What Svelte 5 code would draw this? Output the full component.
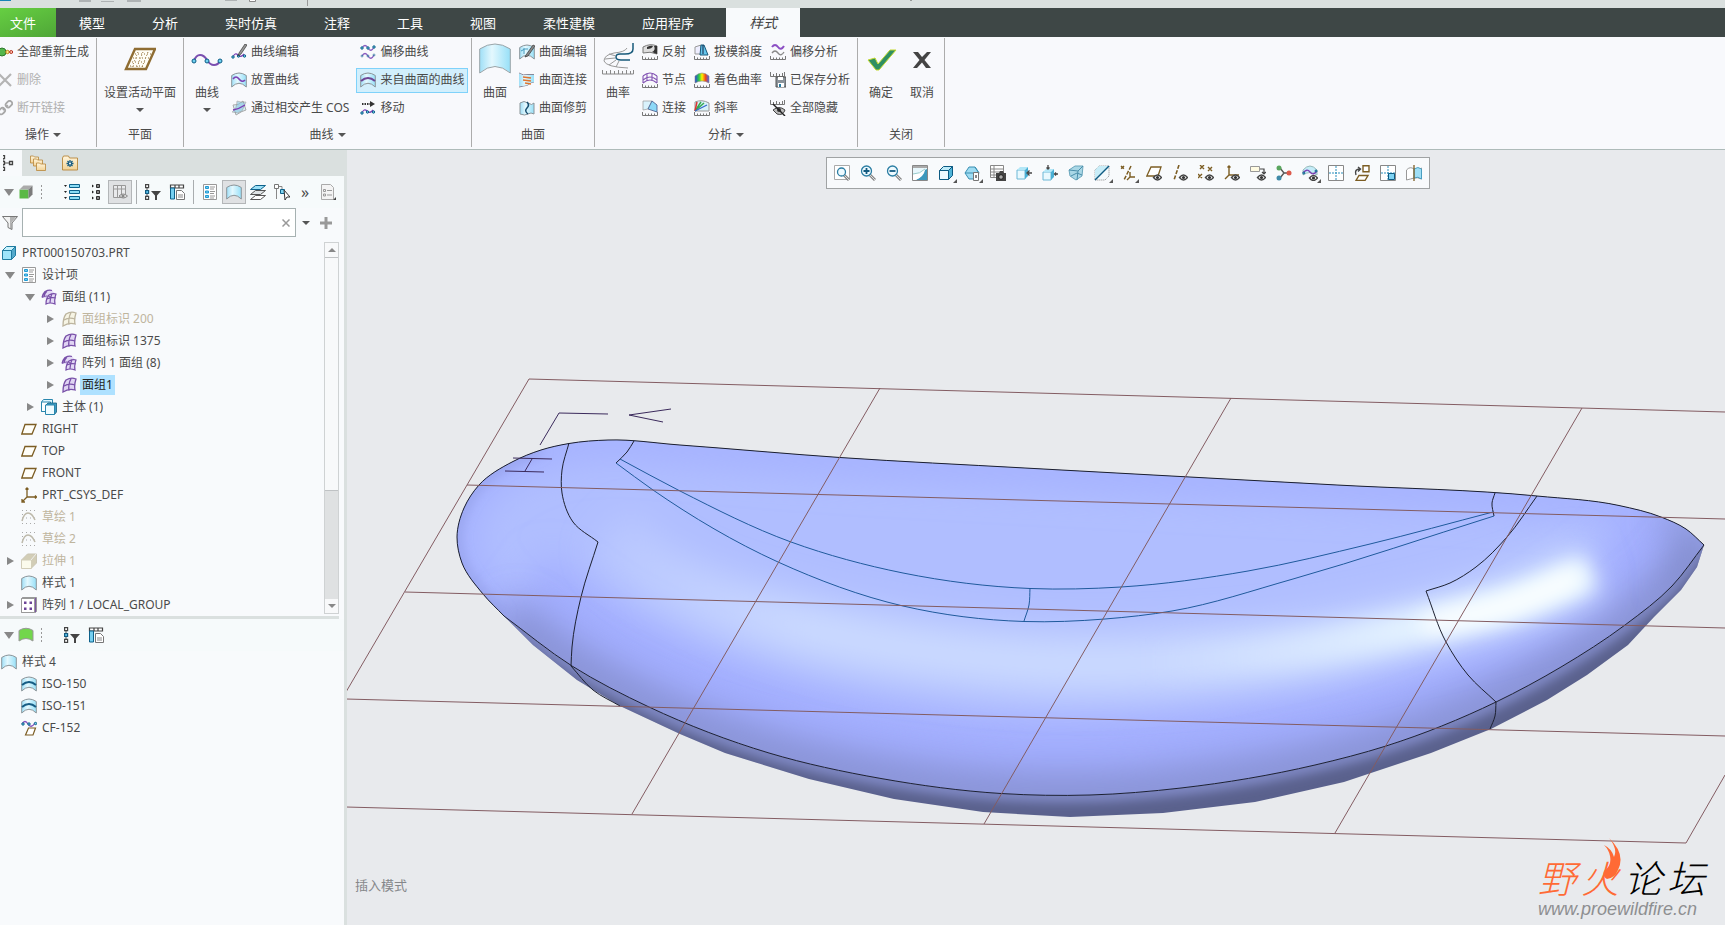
<script>
	const menuTabs = ['模型', '分析', '实时仿真', '注释', '工具', '视图', '柔性建模', '应用程序'];

	const node = (x, y, r = 1.5) =>
		`<circle cx="${x}" cy="${y}" r="${r}" fill="#6fd0ee" stroke="#0d5c86" stroke-width="1"/>`;
	const eye = (x, y) =>
		`<path d="M${x} ${y}q4-5 8 0q-4 5-8 0z" fill="#fff" stroke="#444" stroke-width="1.4"/><circle cx="${x + 4}" cy="${y}" r="1.6" fill="#333"/>`;
	const ruler =
		'<path d="M.5 12v3.500h15V12M3.500 13.500v2M6.500 13.500v2M9.500 13.500v2M12.500 13.500v2" fill="none" stroke="#777"/>';
	const topRuler =
		'<path d="M.5 0v4.500h14V0M3.500 2v2M6.500 1v3M9.500 2v2M12.500 1v3" fill="none" stroke="#777"/>';
	const surface =
		'<path d="M.7 3.500Q8-1.500 15.300 3.500V15Q8 7.500.7 15z" fill="url(#cyan)" stroke="#8b9499"/>';
	const wave =
		'<path d="M2 13q2-5 5-2t6-1" fill="none" stroke="#7b3fb5" stroke-width="1.300"/>' + node(2, 13, 1.2) + node(7.5, 12, 1.2) + node(13.5, 12, 1.2);
	const quilt = (stroke, fill) =>
		`<path d="M5 3q5-3 10-1q-2 6-1 11q-6-2-12 2q0-8 3-12z" fill="${fill}" stroke="${stroke}" stroke-width="1.300"/><path d="M10 1.500q-3 6-2 12M3 9q5-3 11-1" fill="none" stroke="${stroke}" stroke-width="1.300"/>`;
	const quiltGroup =
		'<path d="M3 4q4-4 8-2.500l4 4q-2 4 0 8l-2 2q-4-3-8 0q-1-4 0-6l-4-1q0-2 2-4.500z" fill="#e3d9f5"/><path d="M1 8.500q1-4 3-6 4-2 7-1M1 8.500q5-3 9 0M6 2q-3 3-3 6M5 15q0-6 3-9 4-2 7-1-2 5-1 10-5-2-9 0zM11 4.500q-2 5-2 9M6 10q4-2 9-1" fill="none" stroke="#7850a8" stroke-width="1.200"/>';
	const zoomGlass = (inner) =>
		`<path d="M10 10l5 5" stroke="#888" stroke-width="3"/><path d="M10 10l5 5" stroke="#ddd"/><circle cx="6.500" cy="6" r="5" fill="#eefaff" stroke="#2b7da3" stroke-width="1.300"/>${inner}`;
	const cube = (front, top, side, line) =>
		`<path d="M1.500 5.500h9v9h-9z" fill="${front}" stroke="${line}"/><path d="M1.500 5.500l4-4h9l-4 4z" fill="${top}" stroke="${line}"/><path d="M10.500 5.500l4-4v9l-4 4z" fill="${side}" stroke="${line}"/>`;

	const icons = {
		regen: '<path d="M8 8h7" stroke="#555"/><circle cx="5" cy="8" r="4" fill="#54b64b" stroke="#2d7a2b"/><circle cx="10.500" cy="8" r="1.700" fill="#ffe08a" stroke="#b98615"/><circle cx="14.200" cy="8" r="1.500" fill="#ffc2b0" stroke="#b53422"/>',
		remove: '<path d="M2 2l12 12M14 2L2 14" stroke="#b4b4b4" stroke-width="2.200"/>',
		unlink: '<g fill="none" stroke="#a8a8a8" stroke-width="1.800" transform="rotate(-45 8 8)"><rect x="0" y="5.500" width="7" height="5" rx="2.500"/><rect x="10" y="5.500" width="7" height="5" rx="2.500"/><path d="M5 8h2.500M9.500 8H12"/></g>',
		curveEdit: wave + '<path d="M8 9l6-9 2 1-6 9-3 2z" fill="#999" stroke="#333" stroke-width=".7"/>',
		curvePlace: surface + '<path d="M2 7q3-4 6 0t6 1" fill="none" stroke="#7b3fb5" stroke-width="1.600"/>',
		cos: '<path d="M2 5q5 1 10-4l3 9q-4 1-10 5z" fill="#d3eef7" stroke="#aaa"/><path d="M6 1q5 2 9 1l-4 9q-4 3-10 1 5-3 5-11z" fill="#8bc6df" opacity=".6" stroke="#888" stroke-width=".8"/><path d="M2 10q6-1 12-5" stroke="#7b3fb5" stroke-width="1.500" fill="none"/>',
		offsetCurve: '<path d="M2 4q3-5 6 0t6-1M2 12q3-5 6 0t6-1" fill="none" stroke="#8a5cc0" stroke-width="1.300"/>' + node(2, 4, 1.2) + node(8, 4, 1.2) + node(14, 3, 1.2) + '<g opacity=".6">' + node(2, 12, 1) + node(8, 12, 1) + node(14, 11, 1) + '</g>',
		isoCurve: surface + '<path d="M1 9Q8 3 15 9" fill="none" stroke="#155c84" stroke-width="2"/>',
		fromSurface: surface + '<path d="M1 9Q8 3 15 9" fill="none" stroke="#6d4596" stroke-width="2"/>',
		move: '<path d="M2 4h9" stroke="#333" stroke-width="2" stroke-dasharray="1.500 1"/><path d="M10 1l5 3-5 3z" fill="#333"/>' + wave,
		surface,
		surfEdit: surface + '<path d="M5 4v6M2 7q4-3 7-2" fill="none" stroke="#4a9ec0"/><path d="M7 11L14 1l2 1-7 10-3 1z" fill="#8b8b8b" stroke="#333" stroke-width=".7"/>',
		surfJoin: '<path d="M0 1q4 3 9 1.500l6 0M15 10q-4 0-6 3-4 1-9 2" fill="none" stroke="#889"/><path d="M0 1.500q4 3 9 1.500h6v7q-4 0-6 3-4 1-9 1z" fill="url(#cyan)"/><path d="M4 5l8 1M4 8l8 1M6 11l6 1" stroke="#e07530" stroke-width="1.500"/>',
		surfTrim: '<path d="M1 3q4-3 8 0t6 0v11q-3-2-6 0t-8 0z" fill="url(#cyan)" stroke="#8b9499"/><path d="M8 2q3 3 0 6t1 6" fill="none" stroke="#174e70" stroke-width="1.500"/>',
		reflect: '<path d="M1 3q7-4 14-1v8q-7-3-14-1z" fill="#ddd" stroke="#777"/><path d="M5 3q4-2 6-1-1 3-6 3zM12 2h3v8l-5-2q4-2 2-6z" fill="#333"/>' + ruler,
		knots: '<path d="M1 4q7-6 14 0M1 8q7-6 14 0M1 11q7-6 14 0M1 4v7M5 1.500v7M10 1.500v7M15 4v7" fill="none" stroke="#8354b3" stroke-width="1.100"/>' + ruler,
		connect: '<path d="M1 1l9 0-4 8-5 1z" fill="#d9f2fc" stroke="#999" stroke-width=".7"/><path d="M10 1l5 4v7l-9-3z" fill="#8cd8f7" stroke="#458" stroke-width=".8"/>' + ruler,
		draft: '<path d="M1 3l6-2v9H1z" fill="#eef" stroke="#999"/><path d="M7 1h3l4 10H6z" fill="#65c5ec" stroke="#17587a"/><path d="M9 1v9" stroke="#124"/>' + ruler,
		shaded: '<path d="M1 4q7-6 14 0v7q-7-4-14 0z" fill="url(#rainbow)" stroke="#888" stroke-width=".6"/>' + ruler,
		slope: '<path d="M1 2q7-3 14 1v8H1z" fill="#d9f2f8" stroke="#999"/><path d="M1 11L7 2M1 11l9-8" stroke-width="1.500" stroke="#34a853"/><path d="M1 11L3 2" stroke="#d33" stroke-width="1.500"/><path d="M1 11l12-6" stroke="#36c" stroke-width="1.200"/>' + ruler,
		offsetAnalysis: '<path d="M2 3q3-4 6 0t6-1" fill="none" stroke="#8c4fc4" stroke-width="2"/><path d="M2 9q3-4 6 0t6-1" fill="none" stroke="#888" stroke-width="1.300"/>' + ruler,
		savedAnalysis: topRuler + '<path d="M6 5h10v10H6z" fill="#8a9299" stroke="#555"/><path d="M8 5h5v3H8zM8 11h6v4H8z" fill="#fff"/><path d="M9 12h2v3H9z" fill="#277da5"/>',
		hideAll: topRuler + '<path d="M3 10q6-5 12 0-2 6-8 4z" fill="#bbb" stroke="#444"/><circle cx="9" cy="10" r="2" fill="#333"/><path d="M3 4l12 12" stroke="#222" stroke-width="1.400"/>',
		tree: '<path d="M3 2v12M3 8h8" stroke="#555"/><g fill="#fff" stroke="#444" stroke-width="1.300"><path d="M1.500.7h3v3h-3zM1.500 6.500h3v3h-3zM1.500 12.300h3v3h-3zM9.500 6.500h3v3h-3z"/></g>',
		folders: '<g fill="url(#folder)" stroke="#b8873a" stroke-width=".8"><path d="M.5 1h3l1 1h4v6h-8z"/><path d="M3.500 4h3l1 1h5v6h-9z"/><path d="M6.500 8h3l1 1h5v6.500h-9z"/></g>',
		favorite: '<path d="M.5 3l1-2h5l1 2h8v12H.5z" fill="url(#folder)" stroke="#b8873a" stroke-width=".9"/><path d="M8 5v7M4.500 8.500h7M5.500 6l5 5M10.500 6l-5 5" stroke="#155b80" stroke-width="1.300"/><circle cx="8" cy="8.500" r="1" fill="#fff"/>',
		greenCube: cube('#5bb946', '#aaa', '#7b7b7b', 'none'),
		greenSurface: '<path d="M1 3.500Q8-1 15 3.500V14Q8 9 1 14z" fill="#72d64c" stroke="#999"/>',
		listExpand: '<g fill="#8bdcf5" stroke="#0d618b"><path d="M5.500.5h10v3h-10zM5.500 6.500h10v3h-10zM5.500 12.500h10v3h-10z"/></g><path d="M0 1h3L1.500 3zM0 7h3L1.500 9zM0 13h3l-1.500 2z" fill="#222"/>',
		listCollapse: '<g fill="#888" stroke="#333"><path d="M8.500.5h3v3h-3zM8.500 6.500h3v3h-3zM8.500 12.500h3v3h-3z"/></g><path d="M4 .5v3L6 2zM4 6.500v3L6 8zM4 12.500v3l2-1.500z" fill="#222"/>',
		tableEye: '<path d="M1.500 1.500h12v12h-12zM1.500 5h12M5.500 1.500v12M9.500 1.500v12" fill="#e9eaec" stroke="#999"/><path d="M7 12q4-4 8.500 0-4 4-8.500 0z" fill="#ddd" stroke="#888"/><circle cx="11" cy="12" r="1.500" fill="#888"/>',
		treeFilter: '<path d="M2 2v12" stroke="#555"/><g fill="#fff" stroke="#444" stroke-width="1.200"><path d="M.6.7h3v3h-3zM.6 12.300h3v3h-3z"/><path d="M.6 6.500h3v3h-3z" fill="#57bce5" stroke="#135b80"/></g><path d="M6 7h10l-4 4.500V16h-2v-4.500z" fill="#444"/>',
		tableDoc: '<path d="M1.500 1h13v3h-13zM6 1v3M10 1v3" fill="#fff" stroke="#444" stroke-width="1.200"/><path d="M1.500 4h4v11h-4z" fill="#75cff0" stroke="#0d618b"/><path d="M7.500 6.500h5l3 3v6h-8z" fill="#fff" stroke="#777"/><path d="M9 11h5M9 13h5" stroke="#888"/>',
		designItems: '<path d="M1.500.5h13v15h-13z" fill="#fff" stroke="#999"/><path d="M3.500 2.500h3v2h-3zM3.500 7h3v2h-3zM3.500 11.500h3v2h-3z" fill="#73c7ee" stroke="#1e9bd4"/><path d="M8 3h5M8 5h4M8 7.500h5M8 9.500h4M8 12h5M8 14h4" stroke="#999"/>',
		layers: '<g fill="#fff" stroke="#555"><path d="M.5 15.500l5-4h10l-5 4z"/><path d="M.5 10.500l5-4h10l-5 4z" fill="#dfe4e6"/><path d="M.5 5.500l5-4h10l-5 4z" fill="#9be0f7" stroke="#0d618b"/></g>',
		treeCursor: '<path d="M2.500 4v11M4 2.500h4v5" fill="none" stroke="#888"/><path d="M.5.5h4v4h-4z" fill="#fff" stroke="#777"/><path d="M6.500 5.500h4v4h-4z" fill="#7fd5f2" stroke="#0d618b"/><path d="M10 6l6 7-3 0-2 3z" fill="#fff" stroke="#333"/>',
		page: '<path d="M1.500.5h9l3 3v12h-12z" fill="#f4f4f4" stroke="#aaa"/><path d="M3.500 5.500h2v2h-2zM3.500 10h2v2h-2zM7 6.500h5M7 11h5" fill="none" stroke="#999"/><path d="M16 13v3h-3z" fill="#444"/>',
		funnel: '<path d="M.5 1.500h15L10 8v6.500l-4-2V8z" fill="#f2f2f2" stroke="#777"/><path d="M8 2h6L9.500 7.500V14H8z" fill="#888" opacity=".6"/>',
		part: cube('#9ee4fa', '#c8f2fd', '#54a9cb', '#207ba0'),
		quiltGroup,
		quilt: quilt('#7850a8', '#e0d4f3'),
		quiltOff: quilt('#bcb49e', '#f6f4e4'),
		bodies: '<path d="M.5 3l2-2.500h9v9l-2 3h-9z" fill="#dff6fe" stroke="#2a87ae"/><path d="M.5 3h9v9.500h-9z" fill="#fff" stroke="#2a87ae"/><path d="M5 6l2-2h8.500v9l-2 2.500z" fill="#3d9cc4" stroke="#17607f" stroke-width=".8"/><path d="M4.500 6h9v9.500h-9z" fill="#effbff" stroke="#2a87ae"/>',
		plane: '<path d="M4 3.500h11l-4 9.500H.8z" fill="#fffef8" stroke="#7c5d23" stroke-width="1.300"/>',
		csys: '<path d="M6 1v9M6 10h9M6 10l-5 5M4.500 2.500L6 1l1.500 1.500M14 8.500l1.500 1.500-1.500 1.500M1 12v3h3" fill="none" stroke="#7c5d23" stroke-width="1.300"/>',
		sketch: '<path d="M1 1.500h14M1 14.500h14M1 5.500h1M1 9h14" stroke="#aaa" stroke-dasharray="1 3"/><path d="M1 12q2-8 6-8t7 7" fill="none" stroke="#bdb9ab" stroke-width="1.500"/>',
		extrude: '<path d="M.5 7l6-6h9v9l-5 5H.5z" fill="#d2cdb6" stroke="#c9c5b3"/><path d="M.5 7h10v8.500H.5z" fill="#fbfbec" stroke="#d2ceb9"/><path d="M10 7l5-6" stroke="#eee"/>',
		pattern: '<path d="M.5 1.500l1-1h14v14l-1 1H.5z" fill="#7d55a5" stroke="#999"/><path d="M.5 1.500h13v14H.5z" fill="#fff" stroke="#999"/><path d="M3 4.500h2.500V7H3zM8.500 4.500H11V7H8.500zM3 10.500h2.500V13H3zM8.500 10.500H11V13H8.500z" fill="#6c4497"/>',
		curveOnPlane: '<path d="M1 4q3-5 6 0t7-1" fill="none" stroke="#8350bd" stroke-width="1.300"/>' + node(2, 4, 1.2) + node(8, 4, 1.2) + node(14.500, 3.500, 1.200) + '<path d="M7.500 8h7L12 15H4.500z" fill="#fff" stroke="#7c5d23" stroke-width="1.200"/>',
		zoomFit: '<path d="M.5.5h15v14H.5z" fill="#fff" stroke="#aaa"/>' + zoomGlass('').replace('cx="6.500" cy="6" r="5"', 'cx="7.500" cy="7" r="4"'),
		zoomIn: zoomGlass('<path d="M6.500 3v6M3.500 6h6" stroke="#125a80" stroke-width="1.800"/>'),
		zoomOut: zoomGlass('<path d="M3.500 6h6" stroke="#125a80" stroke-width="1.800"/>'),
		repaint: '<path d="M.5.5h15v15H.5z" fill="#e8f7fc" stroke="#888"/><path d="M1 2h14" stroke="#aaa" stroke-width="2"/><path d="M13 5l2-1v11H3q9-3 10-10z" fill="#3c98bd"/><path d="M1 9q6 0 12-5-2 8-9 11H1z" fill="#fff"/><path d="M1 9q7 0 12-5" fill="none" stroke="#9cc"/>',
		shadeMode: cube('#eefaff', '#bdebf9', '#4fb4d8', '#0d5a82'),
		savedView: '<path d="M1 8l4-6h6l4 6-4 6H5z" fill="#9fdcf2" stroke="#3b8fb2"/><path d="M1 8h14L11 2" fill="none" stroke="#3b8fb2"/><path d="M9.500 7.500h5v8h-5z" fill="#fff" stroke="#777"/><path d="M11 10h2v3h-2z" fill="#888"/>',
		snapshot: '<path d="M.5.5h13v12H.5zM.5 4h13M.5 7h13M.5 10h13M4 .5v12" fill="#fff" stroke="#888"/><path d="M6 8h3l1-2h3l1 2h2v8H6z" fill="#444"/><circle cx="11" cy="12" r="2.300" fill="#aaa" stroke="#222"/>',
		cubeLeft: '<path d="M1 5h8v9H1z" fill="#e9f9fe" stroke="#6db8d6"/><path d="M1 5l3-3h8L9 5z" fill="#b3e7f7"/><path d="M9 5l3-3v9l-3 3z" fill="#4ab0d5"/><path d="M16 8h-4M13.500 5.500L11 8l2.500 2.500" fill="none" stroke="#444" stroke-width="1.300"/>',
		cubeFront: '<path d="M1 7h8v8H1z" fill="#e9f9fe" stroke="#6db8d6"/><path d="M1 7l3-3h8L9 7z" fill="#b3e7f7"/><path d="M9 7l3-3v8l-3 3z" fill="#4ab0d5"/><path d="M16 9h-3M6 0v4M4.500 2.500L6 4l1.500-1.500M14 7.500L12.500 9l1.500 1.500" fill="none" stroke="#444" stroke-width="1.300"/>',
		perspective: '<path d="M1 5l6-4h8l-1 10-6 4-6-4z" fill="#a9d7e6" stroke="#6aa6bc"/><path d="M1 5l9 1 5-5M10 6l-1 9M3 11l6-3 5 2" fill="none" stroke="#4a8eaa"/>',
		section: '<path d="M1 5l4-4h10v10l-4 4H1z" fill="#f5fafc" stroke="#888" stroke-dasharray="1 1"/><path d="M1 14V5l4-4h9z" fill="#c9edf8"/><path d="M1 15L15 1" stroke="#0d5a82" stroke-width="1.500"/>',
		datumAll: '<path d="M1 1l3 3M4 1L1 4M11 1L4 15" stroke="#7c5d23" stroke-width="1.500" stroke-dasharray="4 1.500"/><path d="M10 7v5h5M10 12l-3 3" fill="none" stroke="#7c5d23" stroke-width="1.400"/>',
		planeEye: '<path d="M5 2h10l-3 9H.8z" fill="#fff" stroke="#7c5d23" stroke-width="1.300"/>' + eye(7.5, 12.5),
		axisEye: '<path d="M7 0L2 15" stroke="#7c5d23" stroke-width="1.600" stroke-dasharray="4 1.500"/>' + eye(7.5, 12.5),
		pointEye: '<path d="M2 0l4 4M6 0L2 4M10 2l4 4M14 2l-4 4M0 9l4 4M4 9l-4 4" stroke="#7c5d23" stroke-width="1.400"/>' + eye(7.5, 12.5),
		csysEye: '<path d="M5 1v9h10M5 10l-4 4M3.500 2.500L5 1l1.500 1.500" fill="none" stroke="#7c5d23" stroke-width="1.400"/>' + eye(7.5, 12.5),
		noteEye: '<path d="M.5 1.500h9v5h-9z" fill="#fffbe2" stroke="#999"/><path d="M10 4h4v5M12 7l2 2 2-2" fill="none" stroke="#444" stroke-width="1.200"/>' + eye(7.5, 12.5),
		spinCenter: '<path d="M4 3l4 5M8 8l-4 5M8 8h5" stroke="#555" stroke-width="1.400"/><circle cx="3" cy="3" r="2.500" fill="#5aa65e"/><circle cx="3" cy="13" r="2.500" fill="#3f8aa8"/><circle cx="13" cy="8" r="2.500" fill="#dc5a4c"/>',
		curveEye: '<path d="M1 5q7-8 14 0v5q-7-5-14 0z" fill="#c4ecf8" stroke="#9bb"/><path d="M1 8q4-5 7-1t7-1" fill="none" stroke="#7b3fb5" stroke-width="1.300"/>' + node(1.8, 8, 1) + node(14, 6, 1) + eye(7.5, 13),
		gridView: '<path d="M.5.5h15v15H.5z" fill="#fff" stroke="#888"/><path d="M8 1v14M1 8h14" stroke="#2b8fbd" stroke-dasharray="2 1"/>',
		orient: '<path d="M9 .7h6v6H9zM5 10.500h9l-3 5H2z" fill="#fff" stroke="#7c5d23" stroke-width="1.400"/><path d="M2 10Q0 4 6 4M4 2l2.500 2L4 6.500" fill="none" stroke="#444" stroke-width="1.400"/>',
		viewport: '<path d="M.5.5h15v15H.5z" fill="#fff" stroke="#888"/><path d="M8 1v14M1 8h14" stroke="#2b8fbd" stroke-dasharray="2 1"/><path d="M8.500 8.500h6v6h-6z" fill="#7ed3f3" stroke="#0d5a82"/>',
		mirror: '<path d="M.5 5Q4 1 8 4t7.500-1v11q-4-2-7.500-1t-7.500 2z" fill="#fff" stroke="#999"/><path d="M8 4q4-3 7.500 0v10Q12 11 8 13z" fill="#9fdff6" stroke="#4a9ec0"/><path d="M8 0v16" stroke="#7c5d23" stroke-width="1.300"/>'
	};

	const bigIcons = {
		plane: '<path d="M11 6h20l-9 20H2z" fill="#fffef6" stroke="#8f6d33" stroke-width="2.400"/><path d="M11 11h16M9 15h16M8 19h15M6 23h14M14 9l-6 15M19 9l-6 15M24 9l-6 15" stroke="#8f6d33" stroke-dasharray="1 2"/>',
		curve: '<path d="M3 18Q5 12 9 12T16 17T23 22T29 18" fill="none" stroke="#7b4fb0" stroke-width="2"/>' + node(3, 18, 2) + node(16, 18, 2) + node(29, 18, 2),
		surface: '<path d="M.7 6Q16-4 31.300 6v24Q16 17 .7 30z" fill="url(#cyan)" stroke="#9aa4a8"/>',
		curvature: '<path d="M31 0v6q0 5-8 5h-5q-4 0-4 3t5 3h9" fill="none" stroke="#175a7a" stroke-width="1.500"/><path d="M25 5q-2 4-13 5-10 2-10 8 2 6 24 7M14 13L7 11M13 15l-10 1M14 17l-7 5M17 18l-3 6" fill="none" stroke="#999"/><path d="M.5 27v4h31v-4M4.500 28v3M8.500 27v4M12.500 28v3M16.500 27v4M20.500 28v3M24.500 27v4M28.500 28v3" fill="none" stroke="#888"/>',
		ok: '<path d="M3 17l7-2 3 6L25 7h6L14 27H11z" fill="#2f8f63" stroke="#c4d92e" stroke-width="1"/>',
		cancel: '<path d="M7 9h5l4 5 5-5h4l-6.500 8 6.500 8h-5l-4-5.500L11 25H7l6.500-8z" fill="#444"/>'
	};

	const groups = [
		{
			label: '操作', arrow: true, cls: 'g-ops', cols: [
				[['regen', '全部重新生成'], ['remove', '删除', 'off'], ['unlink', '断开链接', 'off']]
			]
		},
		{ label: '平面', cls: 'g-plane', big: [['plane', '设置活动平面', true]], cols: [] },
		{
			label: '曲线', arrow: true, cls: 'g-curve', big: [['curve', '曲线', true]], cols: [
				[['curveEdit', '曲线编辑'], ['curvePlace', '放置曲线'], ['cos', '通过相交产生 COS']],
				[['offsetCurve', '偏移曲线'], ['fromSurface', '来自曲面的曲线', 'on'], ['move', '移动']]
			]
		},
		{
			label: '曲面', cls: 'g-surf', big: [['surface', '曲面']], cols: [
				[['surfEdit', '曲面编辑'], ['surfJoin', '曲面连接'], ['surfTrim', '曲面修剪']]
			]
		},
		{
			label: '分析', arrow: true, cls: 'g-analysis', big: [['curvature', '曲率']], cols: [
				[['reflect', '反射'], ['knots', '节点'], ['connect', '连接']],
				[['draft', '拔模斜度'], ['shaded', '着色曲率'], ['slope', '斜率']],
				[['offsetAnalysis', '偏移分析'], ['savedAnalysis', '已保存分析'], ['hideAll', '全部隐藏']]
			]
		},
		{ label: '关闭', cls: 'g-close', big: [['ok', '确定'], ['cancel', '取消']], cols: [] }
	];

	const tree = [
		{ level: 0, icon: 'part', text: 'PRT000150703.PRT' },
		{ level: 1, icon: 'designItems', text: '设计项', open: true },
		{ level: 2, icon: 'quiltGroup', text: '面组 (11)', open: true },
		{ level: 3, icon: 'quiltOff', text: '面组标识 200', open: false, dim: true },
		{ level: 3, icon: 'quilt', text: '面组标识 1375', open: false },
		{ level: 3, icon: 'quiltGroup', text: '阵列 1 面组 (8)', open: false },
		{ level: 3, icon: 'quilt', text: '面组1', open: false, selected: true },
		{ level: 2, icon: 'bodies', text: '主体 (1)', open: false },
		{ level: 1, icon: 'plane', text: 'RIGHT' },
		{ level: 1, icon: 'plane', text: 'TOP' },
		{ level: 1, icon: 'plane', text: 'FRONT' },
		{ level: 1, icon: 'csys', text: 'PRT_CSYS_DEF' },
		{ level: 1, icon: 'sketch', text: '草绘 1', dim: true },
		{ level: 1, icon: 'sketch', text: '草绘 2', dim: true },
		{ level: 1, icon: 'extrude', text: '拉伸 1', open: false, dim: true },
		{ level: 1, icon: 'surface', text: '样式 1' },
		{ level: 1, icon: 'pattern', text: '阵列 1 / LOCAL_GROUP', open: false }
	];

	const styleTree = [
		{ level: 0, icon: 'surface', text: '样式 4' },
		{ level: 1, icon: 'isoCurve', text: 'ISO-150' },
		{ level: 1, icon: 'isoCurve', text: 'ISO-151' },
		{ level: 1, icon: 'curveOnPlane', text: 'CF-152' }
	];

	const viewTools = [
		'zoomFit', 'zoomIn', 'zoomOut', 'repaint', 'shadeMode', 'savedView', 'snapshot', 'cubeLeft',
		'cubeFront', 'perspective', 'section', 'datumAll', 'planeEye', 'axisEye', 'pointEye', 'csysEye',
		'noteEye', 'spinCenter', 'curveEye', 'gridView', 'orient', 'viewport', 'mirror'
	];
	const withCorner = ['shadeMode', 'savedView', 'section', 'datumAll', 'curveEye'];

	let filterText = $state('');

	const dist = (a, b) => Math.hypot(b[0] - a[0], b[1] - a[1]) || 1;

	// tangent at point i, weighted by the lengths of its two chords
	function tangent(pts, i) {
		const a = pts[i - 1];
		const b = pts[i];
		const c = pts[i + 1];
		if (!a) return [(c[0] - b[0]) / dist(b, c), (c[1] - b[1]) / dist(b, c)];
		if (!c) return [(b[0] - a[0]) / dist(a, b), (b[1] - a[1]) / dist(a, b)];
		const l1 = dist(a, b);
		const l2 = dist(b, c);
		return [0, 1].map((k) => (((b[k] - a[k]) / l1) * l2 + ((c[k] - b[k]) / l2) * l1) / (l1 + l2));
	}

	function spline(pts) {
		let d = '';
		for (let i = 0; i < pts.length - 1; i++) {
			const p = pts[i];
			const q = pts[i + 1];
			const t1 = tangent(pts, i);
			const t2 = tangent(pts, i + 1);
			const k = dist(p, q) / 3;
			d += `C${p[0] + t1[0] * k} ${p[1] + t1[1] * k} ${q[0] - t2[0] * k} ${q[1] - t2[1] * k} ${q[0]} ${q[1]}`;
		}
		return d;
	}
	const curve = (pts) => `M${pts[0].join(' ')}${spline(pts)}`;

	const topEdge = [[1704, 545], [1686, 529], [1661, 517], [1619, 505.500], [1537, 496], [1337, 485], [1025, 468], [840, 457.500], [680, 445], [608, 440], [569, 443.500], [541, 450], [513, 461.500], [479, 485], [464, 508], [457, 537], [462, 563], [483, 594], [504, 616]];
	const frontEdge = [[504, 616], [572, 666], [649, 707], [769, 753], [881, 778.500], [1001, 793.500], [1090, 795], [1181, 788], [1315, 765], [1386, 746], [1496, 702], [1561, 667], [1625, 625], [1672, 586], [1704, 545]];
	const belly = [[504, 616], [533, 645], [577, 680], [620, 706], [680, 734], [725, 753], [809, 779], [894, 799], [983, 812], [1070, 817], [1163, 813], [1255, 802], [1344, 782], [1431, 753], [1491, 729], [1547, 700], [1587, 675], [1628, 645], [1654, 617], [1681, 590], [1697, 567], [1704, 545]];

	const facePath = curve(topEdge) + spline(frontEdge) + 'Z';
	const bodyPath = curve(topEdge) + 'L' + belly.map((p) => p.join(' ')).join('L') + 'Z';
	const frontPath = curve(frontEdge);
	const leftEdge = curve(topEdge.slice(11));
	const tipEdge = curve([[1661, 517], [1686, 529], [1704, 545], [1672, 586]]);

	const highlight = curve([[610, 530], [640, 562], [693, 592], [791, 625], [970, 657], [1070, 664], [1203, 660], [1337, 645], [1427, 626], [1516, 602], [1590, 570]]);
	const glow = curve([[1150, 663], [1290, 650], [1427, 624], [1516, 602], [1590, 572]]);
	const glare = curve([[1430, 624], [1516, 603], [1572, 579]]);

	const blackCurves = [
		curve([[569, 443], [562, 470], [562, 493], [573, 522], [598, 542]]),
		curve([[598, 542], [581, 597], [572, 647], [571, 666]]),
		curve([[571, 666], [593, 690], [620, 706]]),
		curve([[634, 441], [627, 452], [616, 463]]),
		curve([[1495, 493], [1492, 503], [1494, 516]]),
		curve([[1537, 496], [1507, 537], [1476, 567], [1450, 583], [1426, 591]]),
		curve([[1426, 591], [1446, 642], [1468, 675], [1496, 702]]),
		curve([[1496, 702], [1495, 716], [1490, 729]])
	];
	const blueCurves = [
		curve([[620, 459], [680, 491], [791, 542], [903, 573], [1030, 588.500], [1121, 587], [1248, 571], [1370, 544], [1493, 512]]),
		curve([[616, 463], [653, 490], [778, 562], [903, 606], [1024, 621.500], [1105, 619], [1172, 611], [1293, 579], [1494, 516]]),
		curve([[1030, 588], [1029, 605], [1024, 621]])
	];
	const gridLines = [
		[529, 379, 1725, 412], [467, 485, 1725, 519], [405, 592, 1725, 628], [346, 699, 1725, 736], [346, 807, 1686, 843],
		[529, 379, 346, 692], [880, 388, 632, 814], [1231, 398, 984, 824], [1582, 408, 1335, 833], [1725, 775, 1686, 843]
	];
</script>

{#snippet icon(name, box = '0 0 16 16')}
	<svg class="icon" viewBox={box} aria-hidden="true">{@html icons[name]}</svg>
{/snippet}

{#snippet toolButton(name, pressed = false)}
	<button type="button" class="tool" class:pressed aria-label={name}>{@render icon(name)}</button>
{/snippet}

{#snippet rows(items)}
	<ul class="tree">
		{#each items as item, i (i)}
			<li class="row" class:dim={item.dim} style:--depth={Math.max(0, item.level - 1)}>
				{#if item.level > 0}
					{#if item.open !== undefined}
						<button type="button" class="twist" class:open={item.open} aria-label={item.text}></button>
					{:else}
						<span class="twist-space"></span>
					{/if}
				{/if}
				{@render icon(item.icon)}
				<span class="name" class:selected={item.selected}>{item.text}</span>
			</li>
		{/each}
	</ul>
{/snippet}

<svg class="defs" aria-hidden="true">
	<defs>
		<linearGradient id="cyan">
			<stop offset="0" stop-color="#9fdff7" />
			<stop offset=".4" stop-color="#e4f8fe" />
			<stop offset="1" stop-color="#97e0f8" />
		</linearGradient>
		<linearGradient id="rainbow">
			<stop offset="0" stop-color="#2740e0" />
			<stop offset=".3" stop-color="#2fd040" />
			<stop offset=".5" stop-color="#fff200" />
			<stop offset=".75" stop-color="#f04a1c" />
			<stop offset="1" stop-color="#4560e8" />
		</linearGradient>
		<linearGradient id="folder" x2="0" y2="1">
			<stop offset="0" stop-color="#fff6df" />
			<stop offset="1" stop-color="#f3d294" />
		</linearGradient>
	</defs>
</svg>

<div class="app">
	<div class="quickbar">
		<svg width="940" height="8" aria-hidden="true">
			<path d="M0 0h11v1H0z" fill="#1683b5" />
			<path d="M79 0h12v2H79zM101 1h13v1h-13zM127 0h14v2h-14zM225 0h12v1h-12z" fill="#aeb3b4" />
			<path d="M249.500 0v1.500h6V0" fill="#fff" stroke="#888" />
			<path d="M307.500 0v6" stroke="#999" />
			<path d="M911 0v1" stroke="#555" />
		</svg>
	</div>

	<nav class="menubar">
		<button type="button" class="file">文件</button>
		{#each menuTabs as tab (tab)}
			<button type="button" class="tab">{tab}</button>
		{/each}
		<button type="button" class="tab current">样式</button>
	</nav>

	<div class="ribbon">
		{#each groups as group (group.cls)}
			<section class="group {group.cls}">
				<div class="group-body">
					{#each group.big ?? [] as [name, label, arrow] (name)}
						<button type="button" class="big">
							<svg class="big-icon" viewBox="0 0 32 32" aria-hidden="true">{@html bigIcons[name]}</svg>
							<span>{label}</span>
							{#if arrow}<i class="caret"></i>{/if}
						</button>
					{/each}
					{#each group.cols as col, c (c)}
						<div class="col">
							{#each col as [name, label, state] (name)}
								<button type="button" class="cmd" class:on={state === 'on'} disabled={state === 'off'}>
									{@render icon(name, group.cls === 'g-ops' ? '3 0 13 16' : undefined)}
									<span>{label}</span>
								</button>
							{/each}
						</div>
					{/each}
				</div>
				<div class="group-label">
					{group.label}
					{#if group.arrow}<i class="caret"></i>{/if}
				</div>
			</section>
		{/each}
	</div>

	<div class="main">
		<aside class="side">
			<div class="side-tabs">
				<button type="button" class="side-tab active" aria-label="模型树">{@render icon('tree', '3 0 16 16')}</button>
				<button type="button" class="side-tab" aria-label="文件夹浏览器">{@render icon('folders')}</button>
				<button type="button" class="side-tab" aria-label="收藏夹">{@render icon('favorite')}</button>
			</div>

			<div class="toolbar">
				<button type="button" class="twist open" aria-label="展开"></button>
				<span class="kind">{@render icon('greenCube')}</span>
				<span class="grip"></span>
				{@render toolButton('listExpand')}
				{@render toolButton('listCollapse')}
				{@render toolButton('tableEye', true)}
				<span class="sep"></span>
				{@render toolButton('treeFilter')}
				{@render toolButton('tableDoc')}
				<span class="sep"></span>
				{@render toolButton('designItems')}
				{@render toolButton('surface', true)}
				{@render toolButton('layers')}
				{@render toolButton('treeCursor')}
				<button type="button" class="more">»</button>
				{@render toolButton('page')}
			</div>

			<div class="filter">
				<label for="tree-filter" aria-label="过滤">{@render icon('funnel')}</label>
				<div class="filter-box">
					<input id="tree-filter" type="text" bind:value={filterText} />
					<button type="button" class="clear" aria-label="清除" onclick={() => (filterText = '')}>
						<svg width="8" height="8" viewBox="0 0 8 8"><path d="M.5.500l7 7M7.500.500l-7 7" stroke="#999" stroke-width="1.500" /></svg>
					</button>
				</div>
				<button type="button" class="drop" aria-label="选项"><i class="caret"></i></button>
				<button type="button" class="add" aria-label="添加">
					<svg width="12" height="12" viewBox="0 0 12 12"><path d="M6 0v12M0 6h12" stroke="#999" stroke-width="3" /></svg>
				</button>
			</div>

			<div class="tree-pane">
				{@render rows(tree)}
				<div class="scroll">
					<button type="button" class="scroll-btn" aria-label="向上"><i class="caret up"></i></button>
					<div class="thumb"></div>
					<div class="track"></div>
					<button type="button" class="scroll-btn" aria-label="向下"><i class="caret"></i></button>
				</div>
			</div>

			<div class="toolbar">
				<button type="button" class="twist open" aria-label="展开"></button>
				<span class="kind">{@render icon('greenSurface')}</span>
				<span class="grip"></span>
				{@render toolButton('treeFilter')}
				{@render toolButton('tableDoc')}
			</div>
			{@render rows(styleTree)}
		</aside>

		<main class="view">
			<svg class="scene" viewBox="347 150 1378 775" preserveAspectRatio="xMinYMin slice" role="img" aria-label="模型">
				<defs>
					<clipPath id="face"><path d={facePath} /></clipPath>
					<clipPath id="body"><path d={bodyPath} /></clipPath>
					<filter id="soft" filterUnits="userSpaceOnUse" x="300" y="300" width="1600" height="650"><feGaussianBlur stdDeviation="6" /></filter>
					<filter id="mid" filterUnits="userSpaceOnUse" x="300" y="300" width="1600" height="650"><feGaussianBlur stdDeviation="10" /></filter>
					<filter id="softer" filterUnits="userSpaceOnUse" x="300" y="300" width="1600" height="650"><feGaussianBlur stdDeviation="18" /></filter>
					<linearGradient id="band" gradientUnits="userSpaceOnUse" x1="600" x2="800" y1="0" y2="0">
						<stop offset="0" stop-color="#cbdaff" stop-opacity=".3" />
						<stop offset="1" stop-color="#cbdaff" />
					</linearGradient>
					<linearGradient id="glow" gradientUnits="userSpaceOnUse" x1="1150" x2="1480" y1="0" y2="0">
						<stop offset="0" stop-color="#e4f4ff" stop-opacity="0" />
						<stop offset="1" stop-color="#ecfaff" />
					</linearGradient>
				</defs>
				<path d={bodyPath} fill="#5a618d" />
				<g clip-path="url(#body)" fill="none">
					<path d={frontPath} stroke="#8791d0" stroke-width="12" filter="url(#soft)" />
				</g>
				<g clip-path="url(#face)" fill="none">
					<path d={facePath} fill="#b0beff" />
					<path d={facePath} stroke="#a3afff" stroke-width="30" filter="url(#softer)" />
					<path d={frontPath} stroke="#a2adfe" stroke-width="150" filter="url(#softer)" />
					<path d={frontPath} stroke="#858fcf" stroke-width="40" filter="url(#softer)" />
					<path d={leftEdge} stroke="#8e99e2" stroke-width="6" filter="url(#soft)" />
					<path d={tipEdge} stroke="#7f89c8" stroke-width="18" filter="url(#softer)" />
					<path d={highlight} stroke="url(#band)" stroke-width="56" filter="url(#softer)" />
					<path d={glow} stroke="url(#glow)" stroke-width="36" filter="url(#mid)" />
					<path d={glare} stroke="#fff" stroke-width="16" stroke-linecap="round" filter="url(#mid)" />
				</g>
				<g fill="none" stroke="#1c2030">
					<path d={curve(topEdge)} />
					<path d={frontPath} />
					{#each blackCurves as d (d)}<path {d} />{/each}
				</g>
				<g fill="none" stroke="#1f5a9c">
					{#each blueCurves as d (d)}<path {d} />{/each}
				</g>
				<g stroke="#835c62">
					{#each gridLines as [x1, y1, x2, y2], i (i)}<line {x1} {y1} {x2} {y2} />{/each}
				</g>
				<path d="M540 445L559 413L608 414M671 409L629 415L663 422M513 458L552 459M505 471L544 472M532 459L525 471" fill="none" stroke="#3b2a5c" />
			</svg>

			<div class="view-tools">
				{#each viewTools as name (name)}
					<button type="button" class="view-tool" class:corner={withCorner.includes(name)} aria-label={name}>
						{@render icon(name)}
					</button>
				{/each}
			</div>

			<p class="mode">插入模式</p>

			<div class="brand">
				<div class="brand-name">
					<span class="hot">野</span><span class="hot fire">火<svg class="flame" viewBox="0 0 18 42" aria-hidden="true"><path d="M6 0Q23 16 15 32Q12 40 4 41Q-1 38 1 33Q9 28 7 18Q6 12 1 7Q9 11 11 19Q15 11 6 0z" fill="#ff6a35" /></svg></span><span>论</span><span>坛</span>
				</div>
				<div class="brand-url">www.proewildfire.cn</div>
			</div>
		</main>
	</div>
</div>

<style>
	:global(body) {
		margin: 0;
	}
	.app {
		display: flex;
		flex-direction: column;
		min-height: 100vh;
		font: 12px/16px 'Noto Sans', 'Noto Sans CJK SC', sans-serif;
		color: #4a4a4a;
		background: #f8fafc;
	}
	button {
		margin: 0;
		padding: 0;
		border: none;
		background: none;
		font: inherit;
		color: inherit;
		white-space: nowrap;
	}
	.defs {
		position: absolute;
		width: 0;
		height: 0;
	}
	.icon {
		display: block;
		flex: none;
		width: 16px;
		height: 16px;
	}
	.caret {
		display: inline-block;
		border: 4px solid transparent;
		border-top-color: #555;
		border-bottom: none;
	}
	.caret.up {
		border-top: none;
		border-bottom: 4px solid #888;
	}

	.quickbar {
		height: 8px;
		overflow: hidden;
		background: #dae0df;
	}
	.quickbar svg {
		display: block;
	}
	.menubar {
		display: flex;
		height: 29px;
		font-size: 13px;
		color: #fff;
		background: #3e4746;
	}
	.file {
		width: 56px;
		padding-right: 10px;
		background: linear-gradient(160deg, #66cf42, #4fa637);
	}
	.tab {
		padding: 0 23px;
		margin-right: 1px;
	}
	.tab.current {
		margin-left: 8px;
		font-size: 14px;
		font-style: italic;
		color: #444;
		background: #f8fafc;
	}

	.ribbon {
		display: flex;
		height: 112px;
		border-bottom: 1px solid #aebbb9;
		background: #f8f9fc;
	}
	.group {
		box-sizing: border-box;
		display: flex;
		flex-direction: column;
		margin: 1px 0 2px;
		border-right: 1px solid #acacac;
	}
	.group-body {
		display: flex;
		height: 86px;
	}
	.g-ops {
		width: 97px;
	}
	.g-ops .icon {
		width: 13px;
	}
	.g-plane {
		width: 87px;
	}
	.g-curve {
		width: 288px;
	}
	.g-surf {
		width: 123px;
	}
	.g-analysis {
		width: 263px;
	}
	.g-close {
		width: 87px;
	}
	.group-label {
		display: flex;
		align-items: center;
		justify-content: center;
		gap: 4px;
		height: 24px;
	}
	.g-ops .group-label {
		padding-right: 10px;
	}
	.big {
		display: flex;
		flex-direction: column;
		align-items: center;
		width: 40px;
		padding-top: 5px;
		margin-left: 3px;
	}
	.g-plane .big {
		width: 86px;
		margin-left: 0;
	}
	.big + .big {
		margin-left: 1px;
	}
	.big-icon {
		width: 32px;
		height: 32px;
		margin-bottom: 10px;
	}
	.big .caret {
		margin-top: 7px;
	}
	.col {
		display: grid;
		grid-template-rows: repeat(3, 28px);
		align-items: center;
		align-content: start;
		justify-items: start;
	}
	.cmd {
		box-sizing: border-box;
		display: flex;
		align-items: center;
		gap: 4px;
		height: 25px;
		padding: 0 3px;
		border: 1px solid transparent;
	}
	.g-ops .cmd {
		padding-left: 0;
		border-left: none;
	}
	.cmd.on {
		border-color: #7fd2fa;
		background: #d2effc;
	}
	.cmd:disabled {
		color: #b0b0b0;
	}
	.g-curve .col + .col {
		margin-left: 3px;
	}

	.main {
		display: flex;
		flex: 1;
	}
	.side {
		flex: none;
		width: 344px;
		border-right: 3px solid #dae0df;
	}
	.side-tabs {
		display: flex;
		height: 26px;
		background: #dae0df;
	}
	.side-tab {
		display: flex;
		align-items: center;
		justify-content: center;
		width: 32px;
	}
	.side-tab.active {
		width: 22px;
		background: #f8fafc;
	}
	.toolbar {
		display: flex;
		align-items: center;
		height: 32px;
		background: #f6fafb;
	}
	.twist {
		flex: none;
		width: 18px;
		height: 16px;
	}
	.twist::before {
		content: '';
		display: block;
		width: 0;
		margin-left: 6px;
		border: 4px solid transparent;
		border-left: 7px solid #888;
		border-right: none;
	}
	.twist.open::before {
		margin-left: 4px;
		border: 5px solid transparent;
		border-top: 7px solid #888;
		border-bottom: none;
	}
	.kind {
		width: 22px;
	}
	.grip {
		width: 20px;
		height: 16px;
		background: radial-gradient(circle, #999 1px, transparent 1px) 0 0 / 3px 4px repeat-y;
	}
	.tool {
		box-sizing: border-box;
		display: flex;
		align-items: center;
		justify-content: center;
		width: 24px;
		height: 24px;
	}
	.tool.pressed {
		border: 1px solid #b3b6b8;
		background: #dfe1e3;
	}
	.sep {
		width: 1px;
		height: 24px;
		margin: 0 4px;
		background: #a9adaf;
	}
	.more {
		width: 22px;
		font-size: 16px;
	}

	.filter {
		display: flex;
		align-items: center;
		height: 29px;
		margin-bottom: 5px;
	}
	.filter label {
		width: 20px;
		padding-left: 2px;
	}
	.filter-box {
		box-sizing: border-box;
		display: flex;
		width: 274px;
		height: 29px;
		border: 1px solid #a6b1b1;
		background: #fff;
	}
	.filter input {
		flex: 1;
		min-width: 0;
		padding: 0 4px;
		border: none;
		outline: none;
		background: none;
		font: inherit;
	}
	.clear {
		width: 18px;
	}
	.drop,
	.add {
		display: flex;
		align-items: center;
		justify-content: center;
		width: 20px;
		height: 24px;
	}

	.tree-pane {
		display: flex;
		margin-right: 5px;
		border-bottom: 3px solid #dae0df;
	}
	.tree {
		flex: 1;
		margin: 0;
		padding: 0;
		list-style: none;
	}
	.row {
		display: flex;
		align-items: center;
		height: 22px;
		padding-left: calc(1px + var(--depth) * 20px);
	}
	.row .twist,
	.twist-space {
		width: 20px;
	}
	.name {
		padding: 2px;
		margin-left: 3px;
		white-space: nowrap;
	}
	.dim .name {
		color: #bfb59e;
	}
	.name.selected {
		color: #222;
		background: #aee1ff;
	}
	.scroll {
		box-sizing: border-box;
		display: flex;
		flex-direction: column;
		width: 15px;
		margin-bottom: 2px;
		border: 1px solid #cfd2d3;
		background: #dfe1e2;
	}
	.scroll-btn {
		display: flex;
		align-items: center;
		justify-content: center;
		height: 14px;
		background: #f8f9fa;
	}
	.thumb {
		flex: 234;
		border: solid #bfc2c4;
		border-width: 1px 0;
		background: #f8f9fa;
	}
	.track {
		flex: 109;
	}
	.scroll .caret {
		border-top-color: #888;
	}

	.view {
		position: relative;
		display: flex;
		flex: 1;
		min-width: 0;
		background: #e8eaed;
	}
	.scene {
		position: absolute;
		inset: 0;
		width: 100%;
		height: 100%;
	}
	.view-tools {
		position: absolute;
		top: 7px;
		left: 479px;
		display: flex;
		padding: 0 2px;
		border: 1px solid #a0a3a4;
		background: #f8fafc;
	}
	.view-tool {
		position: relative;
		display: flex;
		align-items: center;
		justify-content: center;
		width: 26px;
		height: 30px;
	}
	.view-tool.corner::after {
		content: '';
		position: absolute;
		right: 2px;
		bottom: 5px;
		border: 2px solid #555;
		border-top-color: transparent;
		border-left-color: transparent;
	}
	.mode {
		position: absolute;
		left: 8px;
		bottom: 32px;
		margin: 0;
		font-size: 13px;
		color: #85878a;
	}
	.brand {
		position: absolute;
		right: 20px;
		bottom: 6px;
	}
	.brand-name {
		display: flex;
		gap: 5px;
		font-size: 38px;
		line-height: 42px;
		font-weight: 300;
		font-style: italic;
		color: #000;
	}
	.hot {
		color: #ff6a35;
	}
	.fire {
		position: relative;
	}
	.flame {
		position: absolute;
		left: 22px;
		top: -19px;
		width: 18px;
		height: 42px;
	}
	.brand-url {
		font: italic 18px/20px 'Liberation Sans', sans-serif;
		color: #8e8f91;
	}
</style>
